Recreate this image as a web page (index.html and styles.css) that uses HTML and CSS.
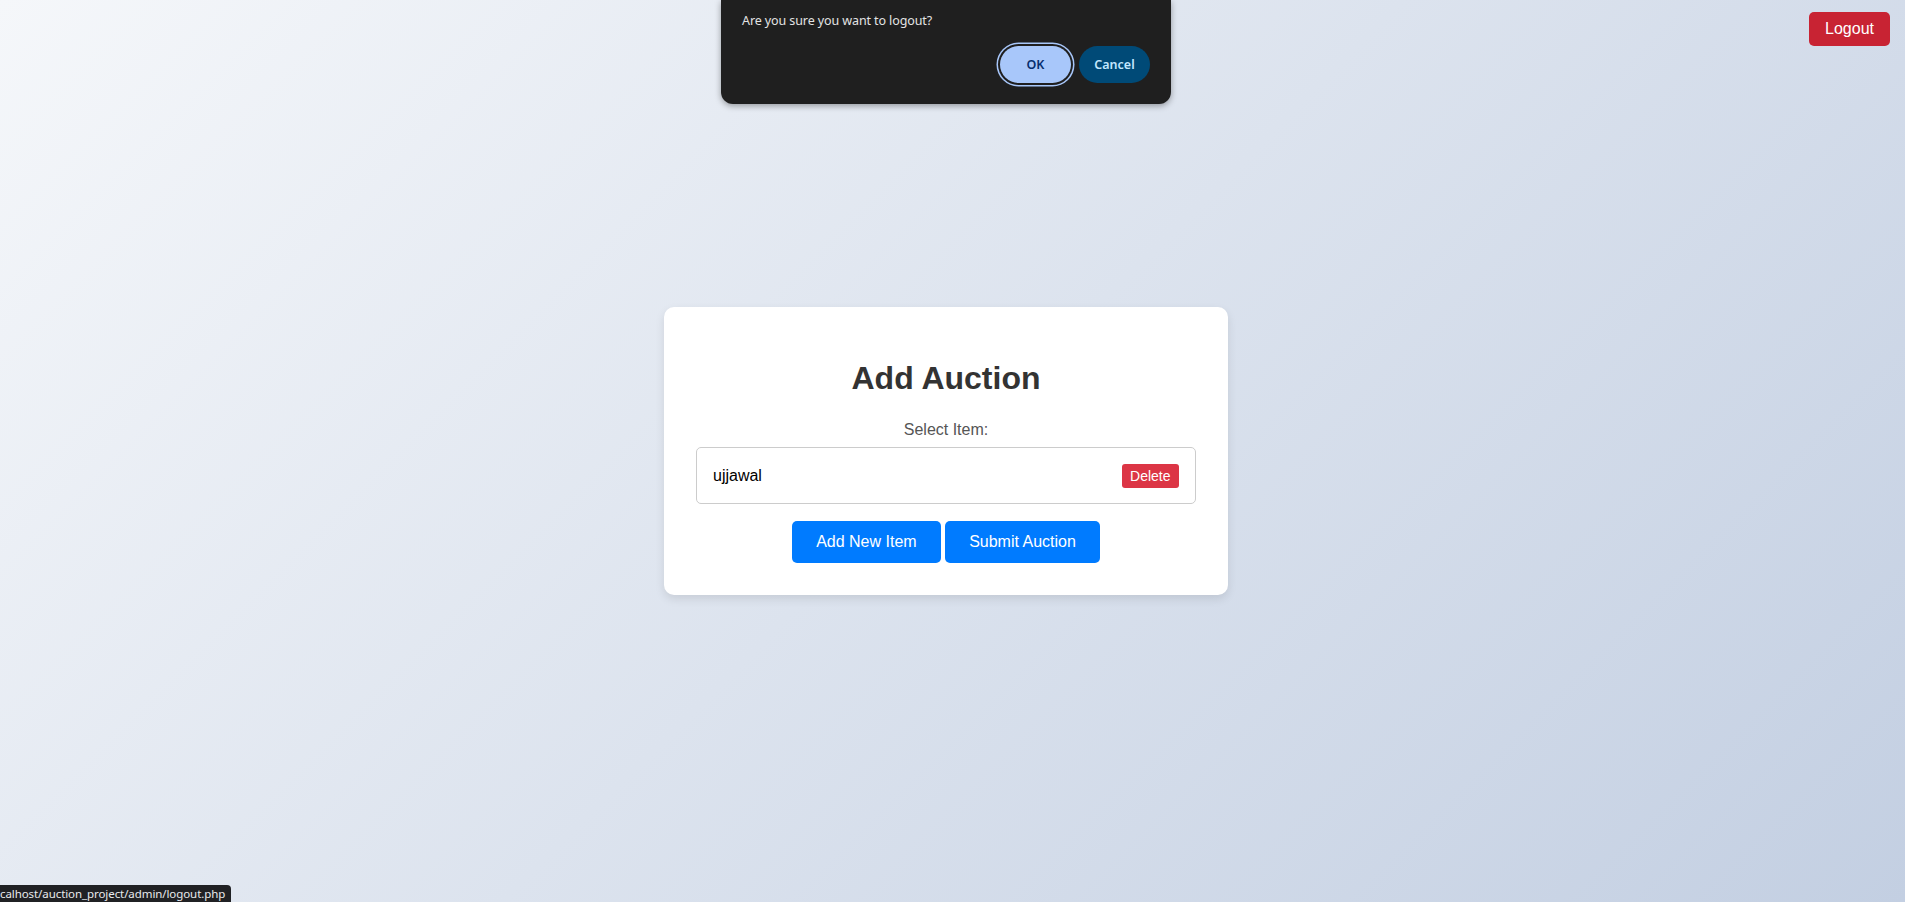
FILE: index.html
```html
<!DOCTYPE html>
<html lang="en">
<head>
<meta charset="utf-8">
<title>Add Auction</title>
<link rel="stylesheet" href="styles.css">
</head>
<body>
  <button class="logout-btn">Logout</button>

  <main class="page">
    <div class="card">
      <h1 class="title">Add Auction</h1>
      <label class="label">Select Item:</label>
      <div class="item-row">
        <span class="item-name">ujjawal</span>
        <button class="delete-btn">Delete</button>
      </div>
      <div class="actions">
        <button class="primary-btn">Add New Item</button>
        <button class="primary-btn">Submit Auction</button>
      </div>
    </div>
  </main>

  <div class="dialog">
    <p class="dialog-msg">Are you sure you want to logout?</p>
    <div class="dialog-actions">
      <button class="dlg-btn dlg-ok">OK</button>
      <button class="dlg-btn dlg-cancel">Cancel</button>
    </div>
  </div>

  <div class="statusbar">calhost/auction_project/admin/logout.php</div>
</body>
</html>
```
FILE: styles.css
```css
html, body {
  margin: 0;
  padding: 0;
}

body {
  min-height: 100vh;
  background: linear-gradient(135deg, #f5f7fa 0%, #c3cfe2 100%);
  font-family: "Liberation Sans", Arial, sans-serif;
  overflow: hidden;
}

.page {
  height: 100vh;
  box-sizing: border-box;
  padding-right: 13px;
  display: flex;
  align-items: center;
  justify-content: center;
}

.card {
  width: 500px;
  padding: 32px;
  background: #ffffff;
  border-radius: 10px;
  box-shadow: 0 4px 10px rgba(0, 0, 0, 0.1);
  display: flex;
  flex-direction: column;
  align-items: stretch;
  text-align: center;
}

.title {
  margin: 21.5px 0 24px;
  font-size: 32px;
  font-weight: bold;
  line-height: 37px;
  color: #333333;
}

.label {
  display: block;
  font-size: 16px;
  line-height: 18px;
  color: #555555;
  margin-bottom: 8px;
}

.item-row {
  display: flex;
  align-items: center;
  justify-content: space-between;
  border: 1px solid #cccccc;
  border-radius: 5px;
  padding: 15.5px 16px;
  text-align: left;
}

.item-name {
  font-size: 16px;
  color: #000000;
}

.delete-btn {
  font-family: "Liberation Sans", Arial, sans-serif;
  font-size: 14px;
  line-height: 16px;
  padding: 4px 8.5px;
  border: none;
  border-radius: 3px;
  background: #dc3545;
  color: #ffffff;
}

.actions {
  display: flex;
  justify-content: center;
  gap: 4.5px;
  margin-top: 16.7px;
}

.primary-btn {
  font-family: "Liberation Sans", Arial, sans-serif;
  font-size: 16px;
  line-height: 18px;
  padding: 12px 24px;
  border: none;
  border-radius: 5px;
  background: #007bff;
  color: #ffffff;
}

.logout-btn {
  position: absolute;
  top: 12px;
  right: 15px;
  font-family: "Liberation Sans", Arial, sans-serif;
  font-size: 16px;
  line-height: 18px;
  padding: 8px 16px;
  border: none;
  border-radius: 5px;
  background: #c82333;
  color: #ffffff;
}

.dialog {
  position: absolute;
  top: 0;
  left: 721px;
  width: 450px;
  box-sizing: border-box;
  padding: 11px 21px 21px;
  background: #1f1f1f;
  border-radius: 0 0 12px 12px;
  box-shadow: 0 2px 6px rgba(0, 0, 0, 0.35);
  font-family: "Noto Sans", "Open Sans", sans-serif;
}

.dialog-msg {
  margin: 0;
  font-size: 12.5px;
  line-height: 20px;
  color: #e3e3e3;
  letter-spacing: -0.1px;
}

.dialog-actions {
  display: flex;
  justify-content: flex-end;
  gap: 8px;
  margin-top: 15px;
}

.dlg-btn {
  width: 71px;
  height: 37px;
  border: none;
  border-radius: 19px;
  font-family: "Noto Sans", "Open Sans", sans-serif;
  font-size: 12.5px;
  font-weight: 600;
  padding: 0;
}

.dlg-ok {
  background: #a8c7fa;
  color: #062e6f;
  box-shadow: 0 0 0 2px #1f1f1f, 0 0 0 3.5px #a8c7fa;
}

.dlg-cancel {
  background: #004a77;
  color: #c2e7ff;
}

.statusbar {
  position: absolute;
  left: 0;
  bottom: 0;
  height: 17px;
  padding: 0 6px 0 0;
  background: #202124;
  border-top-right-radius: 4px;
  color: #e8eaed;
  font-family: "Noto Sans", "Open Sans", sans-serif;
  font-size: 11.5px;
  line-height: 17px;
  letter-spacing: -0.08px;
  white-space: nowrap;
}
```
